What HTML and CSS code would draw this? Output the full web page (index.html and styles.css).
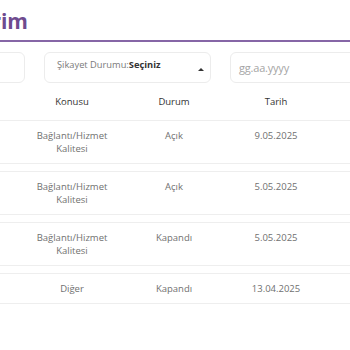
FILE: index.html
```html
<!DOCTYPE html>
<html lang="tr">
<head>
<meta charset="utf-8">
<link rel="stylesheet" href="styles.css">
</head>
<body>
<div class="page">
  <div class="head">
    <h1 class="title">Şikayetlerim</h1>
  </div>
  <div class="filters">
    <div class="box box-first"></div>
    <div class="box box-select">
      <span class="lbl">Şikayet Durumu:</span><span class="val">Seçiniz</span>
      <span class="arrow"></span>
    </div>
    <div class="box box-date"><span class="ph">gg.aa.yyyy</span></div>
  </div>
  <div class="table">
    <div class="row header">
      <span></span><span class="c">Konusu</span><span class="c">Durum</span><span class="c">Tarih</span>
    </div>
    <div class="row item">
      <span></span><span class="c">Bağlantı/Hizmet<br>Kalitesi</span><span class="c">Açık</span><span class="c">9.05.2025</span>
    </div>
    <div class="row item">
      <span></span><span class="c">Bağlantı/Hizmet<br>Kalitesi</span><span class="c">Açık</span><span class="c">5.05.2025</span>
    </div>
    <div class="row item">
      <span></span><span class="c">Bağlantı/Hizmet<br>Kalitesi</span><span class="c">Kapandı</span><span class="c">5.05.2025</span>
    </div>
    <div class="row item">
      <span></span><span class="c">Diğer</span><span class="c">Kapandı</span><span class="c">13.04.2025</span>
    </div>
  </div>
</div>
</body>
</html>
```
FILE: styles.css
```css
html, body {
  margin: 0;
  padding: 0;
  background: #ffffff;
  overflow: hidden;
}
body {
  width: 350px;
  height: 350px;
  font-family: "Open Sans", "Noto Sans", sans-serif;
}
.page {
  width: 350px;
}
.head {
  height: 40px;
  border-bottom: 2px solid #8666a6;
  display: flex;
  align-items: flex-start;
}
.title {
  margin: 0;
  margin-top: 7px;
  width: 28px;
  display: flex;
  justify-content: flex-end;
  white-space: nowrap;
  font-size: 21px;
  font-weight: 700;
  line-height: 28px;
  color: #6f4b8f;
}
.filters {
  display: flex;
  gap: 19px;
  margin-top: 10px;
  height: 31px;
}
.box {
  flex: none;
  box-sizing: border-box;
  height: 31px;
  border: 1px solid #ececec;
  border-radius: 6px;
  background: #fff;
  display: flex;
  align-items: center;
}
.box-first {
  width: 60px;
  margin-left: -35px;
}
.box-select {
  width: 167px;
  padding-left: 12px;
  padding-bottom: 6px;
  position: relative;
  font-size: 9.3px;
}
.lbl {
  color: #7a7a7a;
}
.val {
  color: #333;
  font-weight: 700;
}
.arrow {
  position: absolute;
  right: 6px;
  top: 15px;
  width: 0;
  height: 0;
  border-left: 3px solid transparent;
  border-right: 3px solid transparent;
  border-bottom: 3px solid #333;
}
.box-date {
  width: 150px;
  padding-left: 8px;
}
.ph {
  color: #a5a5a5;
  font-size: 11px;
  letter-spacing: -0.2px;
}
.table {
  margin-top: 8px;
  display: flex;
  flex-direction: column;
  gap: 7px;
}
.row {
  display: grid;
  grid-template-columns: 21px 102px 102px 102px;
  align-items: start;
}
.c {
  text-align: center;
  font-size: 9.5px;
  line-height: 13px;
}
.header {
  box-sizing: border-box;
  height: 29px;
  padding-top: 4px;
  margin-bottom: -7px;
}
.header .c {
  color: #333;
}
.item {
  border-top: 1px solid #eeeeee;
  border-bottom: 1px solid #eeeeee;
  padding: 8px 0 8px;
}
.item .c {
  color: #707070;
}
```
